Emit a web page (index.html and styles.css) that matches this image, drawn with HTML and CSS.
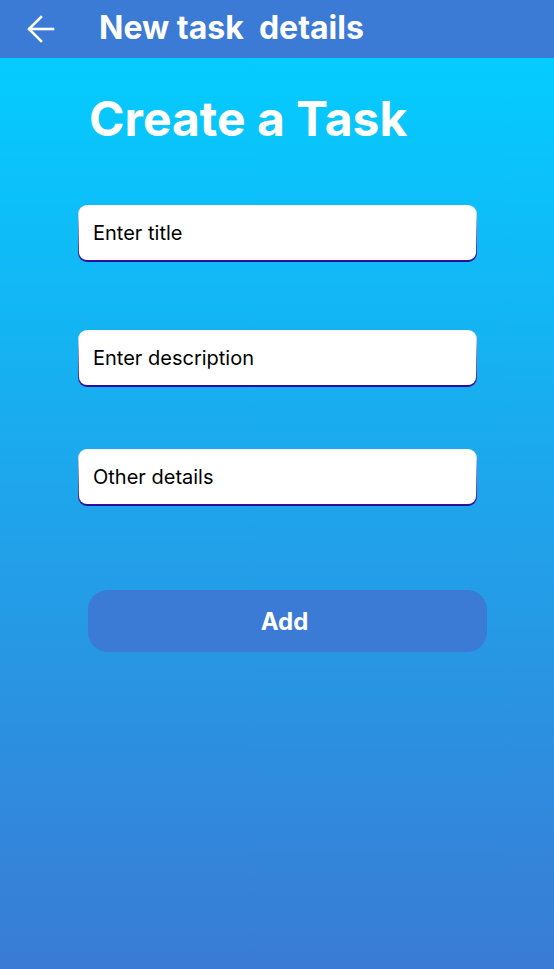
FILE: index.html
```html
<!DOCTYPE html>
<html lang="en">
<head>
<meta charset="utf-8">
<title>New task details</title>
<link rel="stylesheet" href="styles.css">
</head>
<body>
<div class="app">
  <header class="topbar">
    <svg class="back" width="28" height="28" viewBox="0 0 28 28" fill="none" stroke="#fff" stroke-width="2.6" stroke-linecap="square">
      <path d="M26 14H2.5"/>
      <path d="M14 2L2 14l12 12"/>
    </svg>
    <h1 class="topbar-title">New task&nbsp; details</h1>
  </header>
  <main class="content">
    <h2 class="heading">Create a Task</h2>
    <form class="form">
      <div class="field"><input class="input" type="text" placeholder="Enter title"></div>
      <div class="field"><input class="input" type="text" placeholder="Enter description"></div>
      <div class="field"><input class="input" type="text" placeholder="Other details"></div>
      <button class="add-btn" type="button">Add</button>
    </form>
  </main>
</div>
</body>
</html>
```

FILE: styles.css
```css
* { box-sizing: border-box; }
html, body { margin: 0; padding: 0; }
body {
  font-family: Inter, "Noto Sans", sans-serif;
  width: 554px;
  height: 969px;
  overflow: hidden;
}
.app {
  display: flex;
  flex-direction: column;
  height: 969px;
}
.topbar {
  height: 58px;
  background: #3b7bd5;
  display: flex;
  align-items: center;
  padding-left: 27px;
  flex-shrink: 0;
}
.back { display: block; margin-top: 0; }
.topbar-title {
  margin: 0 0 3px 44px;
  color: #fff;
  font-weight: 700;
  font-size: 32px;
  letter-spacing: 0;
}
.content {
  flex: 1;
  background: linear-gradient(180deg, #04ccff 0%, #3a7bd5 100%);
  padding-top: 31px;
}
.heading {
  margin: 0 0 0 89px;
  color: #fff;
  font-weight: 700;
  font-size: 48px;
  line-height: 60px;
}
.form {
  display: flex;
  flex-direction: column;
  padding-top: 56px;
}
.field {
  margin-left: 78px;
  width: 399px;
  height: 57px;
  border-radius: 9px;
  padding: 1px 1px 2px 1px;
  background: linear-gradient(180deg, #ffffff 0%, #9a7fd0 45%, #2a0a9c 100%);
  margin-bottom: 68px;
}
.field:nth-child(2) { margin-bottom: 62px; }
.input {
  display: block;
  width: 100%;
  height: 100%;
  border: none;
  border-radius: 8px;
  background: #fff;
  padding: 0 14px;
  font-family: Inter, "Noto Sans", sans-serif;
  font-size: 20px;
  color: #000;
  outline: none;
}
.input::placeholder { color: #000; opacity: 1; }
.add-btn {
  margin: 16px 0 0 88px;
  width: 399px;
  height: 62px;
  border: none;
  border-radius: 20px;
  background: #3b7bd5;
  color: #fff;
  font-family: Inter, "Noto Sans", sans-serif;
  font-weight: 700;
  font-size: 24px;
  padding: 0 6px 0 0;
  cursor: pointer;
}
```
